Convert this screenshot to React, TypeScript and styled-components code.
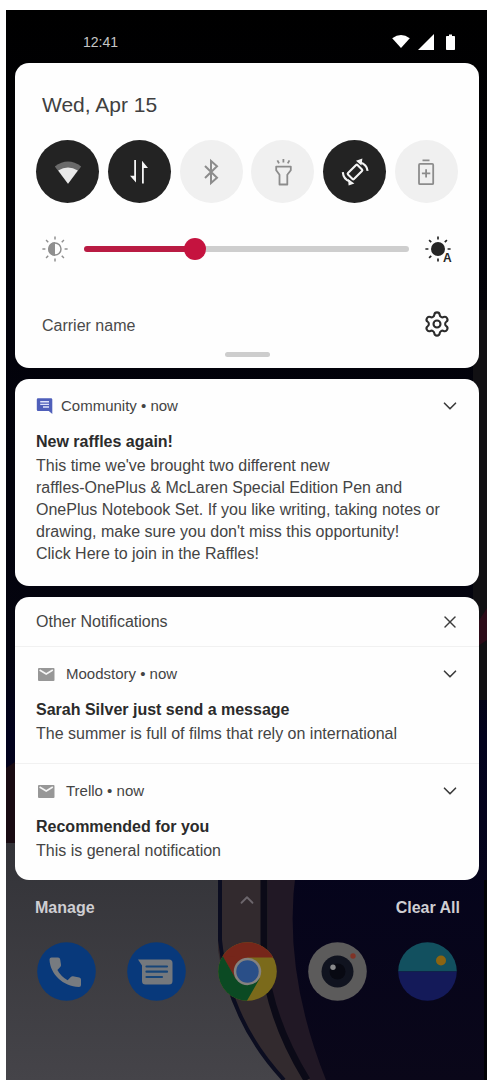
import React, { useState } from "react";
import styled, { createGlobalStyle } from "styled-components";
import { ChevronDown, ChevronUp, Settings, X } from "lucide-react";

const Global = createGlobalStyle`
  *, *::before, *::after { box-sizing: border-box; }
  body { margin: 0; background: #fff; font-family: "Liberation Sans", Arial, sans-serif; }
  button { border: 0; padding: 0; margin: 0; background: none; color: inherit; font: inherit; cursor: pointer; }
  h1, h2, h3, p { margin: 0; font: inherit; }
  svg { display: block; }
`;

const Phone = styled.main`
  position: relative;
  isolation: isolate;
  margin: 10px 0 1px 6px;
  padding: 0 8px 0 9px;
  background: #020206;
`;

const Wallpaper = styled.svg`
  position: absolute;
  inset: 0;
  z-index: -1;
  width: 100%;
  height: 100%;
`;

const StatusBar = styled.header`
  display: flex;
  align-items: center;
  justify-content: space-between;
  height: 53px;
  padding: 10px 20px 0 68px;
  color: #c6c6c6;
  font-size: 14px;
`;

const StatusIcons = styled.div`
  display: flex;
  align-items: center;
  gap: 8px;
`;

const Stack = styled.div`
  display: flex;
  flex-direction: column;
  gap: 11px;
`;

const Card = styled.section`
  border-radius: 14px;
  background: #fefefe;
  color: #444;
  overflow: hidden;
`;

const QuickPanel = styled(Card)`
  display: flex;
  flex-direction: column;
  padding: 28px 21px 11px;
`;

const DateLabel = styled.h1`
  padding-left: 6px;
  color: #404040;
  font-size: 21px;
  line-height: 28px;
`;

const Toggles = styled.div`
  display: flex;
  justify-content: space-between;
  margin-top: 21px;
`;

const Toggle = styled.button<{ $on: boolean }>`
  display: grid;
  place-items: center;
  width: 63px;
  height: 63px;
  border-radius: 50%;
  background: ${(p) => (p.$on ? "#232323" : "#f0f0f0")};
  color: ${(p) => (p.$on ? "#f4f4f4" : "#8c8c8c")};
`;

const BrightnessRow = styled.div`
  display: flex;
  align-items: center;
  justify-content: space-between;
  gap: 16px;
  height: 32px;
  margin-top: 30px;
  padding: 0 3px 0 6px;

  & > svg { flex: none; }
`;

const Slider = styled.input`
  appearance: none;
  flex: 1;
  min-width: 0;
  height: 22px;
  margin: 0;
  background: transparent;

  &::-webkit-slider-runnable-track {
    height: 6px;
    border-radius: 3px;
    background: linear-gradient(to right, #b91b43 var(--level), #cecece var(--level));
  }
  &::-webkit-slider-thumb {
    appearance: none;
    width: 22px;
    height: 22px;
    margin-top: -8px;
    border-radius: 50%;
    background: #c5133f;
  }
`;

const PanelFooter = styled.div`
  display: flex;
  align-items: flex-end;
  justify-content: space-between;
  height: 28px;
  margin-top: 45px;
  padding: 0 7px 0 6px;
  color: #4a4a4a;
  font-size: 16px;
  line-height: 24px;
`;

const SettingsButton = styled.button`
  color: #2c2c2c;
`;

const Handle = styled.div`
  width: 45px;
  height: 5px;
  margin: 14px auto 0;
  border-radius: 3px;
  background: #cdcdcd;
`;

const Item = styled.article<{ $tall?: boolean }>`
  padding: 16px 21px ${(p) => (p.$tall ? 21 : 18)}px;
  font-size: 16px;
  line-height: 22px;

  & + & { border-top: 1px solid #f1f1f1; }
`;

const ItemHeader = styled.div<{ $gap: number }>`
  display: flex;
  align-items: center;
  gap: ${(p) => p.$gap}px;
  margin-bottom: 14px;
  font-size: 15px;

  & > button { margin-left: auto; }
`;

const ItemTitle = styled.h3`
  margin-bottom: 2px;
  color: #2b2b2b;
  font-weight: 700;
  font-size: 16px;
`;

const GroupHeader = styled.div`
  display: flex;
  align-items: center;
  justify-content: space-between;
  height: 50px;
  padding: 0 21px;
  border-bottom: 1px solid #f1f1f1;
  font-size: 16px;
`;

const IconButton = styled.button`
  display: flex;
  align-items: center;
  justify-content: center;
  width: 16px;
  height: 16px;
  color: #3c3c3c;

  & > svg { flex: none; }
`;

const Home = styled.footer`
  position: relative;
  padding: 17px 19px 79px 20px;
`;

const Actions = styled.div`
  display: flex;
  justify-content: space-between;
  color: #cfced2;
  font-weight: 700;
  font-size: 16px;
  line-height: 22px;
`;

const SwipeHint = styled.div`
  position: absolute;
  top: 9px;
  left: 50%;
  transform: translateX(-50%);
  color: #6c666c;
`;

const Dock = styled.nav`
  display: flex;
  justify-content: space-between;
  margin: 23px 3px 0 2px;
`;

const WifiIcon = () => (
  <svg width="32" height="32" viewBox="0 0 32 32">
    <path d="M16 27.7 2.8 10.4Q16 .8 29.2 10.4Z" fill="#6a6a6a" />
    <path d="M16 27.7 6.2 14.6Q16 8.2 25.8 14.6Z" fill="#e9e9e9" />
  </svg>
);

const DataIcon = () => (
  <svg width="32" height="32" viewBox="0 0 32 32" fill="currentColor">
    <path d="M11.2 4H13V26.5L7 19.8H11.2Z" />
    <path d="M20.8 27.5H19V4.7L25 12H20.8Z" />
  </svg>
);

const BluetoothIcon = () => (
  <svg width="32" height="32" viewBox="0 0 32 32" fill="none" stroke="currentColor" strokeWidth="2">
    <path d="M10 10 22 21.7 16 27V5L22 10.3 10 22" />
  </svg>
);

const TorchIcon = () => (
  <svg width="32" height="32" viewBox="0 0 32 32" fill="none" stroke="currentColor" strokeWidth="1.8">
    <path d="M9.2 10.6H23.8V14.2L20.3 18.8V28.5H12.5V18.8L9.2 14.2Z" strokeLinejoin="round" />
    <path d="M10.4 4.4 12 7.4M16.4 3V6.6M22.4 4.4 20.8 7.4" />
  </svg>
);

const RotateIcon = () => (
  <svg width="32" height="32" viewBox="0 0 32 32" fill="none" stroke="currentColor" strokeWidth="2.1">
    <rect x="11.8" y="9.3" width="8.4" height="13.4" rx="1" transform="rotate(45 16 16)" />
    <path d="M21 6.6Q27.8 8.4 28.6 14.8M11 25.4Q4.4 23.6 3.8 16.2" />
    <path d="M17 4.8 23.4 2.6 22.4 9.4ZM15.4 27.4 9 23 9.6 29.6Z" fill="currentColor" stroke="none" />
  </svg>
);

const BatterySaverIcon = () => (
  <svg width="32" height="32" viewBox="0 0 32 32" fill="none" stroke="currentColor" strokeWidth="1.8">
    <path d="M12.5 4.3H19.5" />
    <rect x="9" y="7.9" width="14.2" height="20.3" rx="1" />
    <path d="M16.1 13.2V21.6M11.9 17.4H20.3" />
  </svg>
);

const rays = [0, 45, 90, 135, 180, 225, 270, 315];

const SunDimIcon = () => (
  <svg width="26" height="26" viewBox="0 0 26 26" fill="none" stroke="#8f8f8f" strokeWidth="1.5">
    {rays.map((a) => (
      <path key={a} d="M13 .4V3.4" transform={`rotate(${a} 13 13)`} />
    ))}
    <circle cx="13" cy="13" r="6" />
    <path d="M13 6A7 7 0 0 0 13 20Z" fill="#8f8f8f" stroke="none" />
  </svg>
);

const SunAutoIcon = () => (
  <svg width="30" height="32" viewBox="0 -3 30 32">
    <g stroke="#262626" strokeWidth="1.7">
      {rays.filter((a) => a !== 135).map((a) => (
        <path key={a} d="M13 .4V3.4" transform={`rotate(${a} 13 13)`} />
      ))}
    </g>
    <circle cx="13" cy="13" r="7" fill="#262626" />
    <text x="18" y="26" fill="#262626" stroke="#fefefe" strokeWidth="2" paintOrder="stroke" fontSize="12" fontWeight="700">
      A
    </text>
  </svg>
);

const CommunityIcon = () => (
  <svg width="17" height="16" viewBox="0 0 17 16">
    <path d="M2 .3H15Q16.3.3 16.3 1.6V16L12.8 13H2Q.8 13 .8 11.8V1.5Q.8.3 2 .3Z" fill="#4f5fba" />
    <path d="M4.2 3.8H13M4.2 6.4H13M7 9H13" stroke="#dfe3fa" strokeWidth="1.4" />
  </svg>
);

const MailIcon = () => (
  <svg width="20" height="14" viewBox="0 0 20 14">
    <rect x="2" y="1" width="16.5" height="13" rx="1" fill="#979797" />
    <path d="M3.6 3 10.2 7 16.8 3" fill="none" stroke="#f5f5f5" strokeWidth="1.6" />
  </svg>
);

const PhoneIcon = () => (
  <svg width="59" height="59" viewBox="0 0 59 59">
    <circle cx="29.5" cy="29.5" r="29.3" fill="#08397b" />
    <path
      d="M14.5 15.5H21Q23 15.5 23.2 17.5L24 22.7Q24.2 24 23.2 25L20.4 28Q24 34.6 30.6 38.2L33.8 35Q34.8 34 36 34.3L42.3 35.4Q44 35.7 44 37.5V43Q44 45 42 45C26 44.6 13 32 12.5 17.5Q12.5 15.5 14.5 15.5Z"
      fill="#777b80"
    />
  </svg>
);

const MessagesIcon = () => (
  <svg width="59" height="59" viewBox="0 0 59 59">
    <circle cx="29.5" cy="29.5" r="29.3" fill="#08397b" />
    <path d="M11 17.5H42Q45.5 17.5 45.5 21V39Q45.5 42.5 42 42.5H18.5Q15 42.5 15 39V23.5Z" fill="#74787d" />
    <path d="M19.5 24.5H40M19.5 29.7H40M19.5 35H35" stroke="#174578" strokeWidth="2.2" strokeLinecap="round" />
  </svg>
);

const BrowserIcon = () => (
  <svg width="59" height="59" viewBox="0 0 59 59">
    <clipPath id="disc">
      <circle cx="29.5" cy="29.5" r="29.3" />
    </clipPath>
    <g clipPath="url(#disc)">
      <rect width="59" height="59" fill="#7b6a1b" />
      <rect width="59" height="15.5" fill="#76261a" />
      <path d="M4 13.5 17.5 15H30L17.5 37Z" fill="#76261a" />
      <path d="M0 6 5 14.5 17.5 36.5 29.5 43 42 36 28.8 59H0Z" fill="#0b4a23" />
    </g>
    <circle cx="29.5" cy="29.5" r="13.7" fill="#85827f" />
    <circle cx="29.5" cy="29.5" r="11.2" fill="#2a4f88" />
  </svg>
);

const CameraIcon = () => (
  <svg width="59" height="59" viewBox="0 0 59 59">
    <circle cx="29.5" cy="29.5" r="29.3" fill="#5c5b5b" />
    <circle cx="29.5" cy="29.5" r="16" fill="#10131f" />
    <circle cx="29.5" cy="29.5" r="8" fill="#080912" />
    <circle cx="25" cy="25.3" r="2.7" fill="#898a8c" />
    <circle cx="45" cy="14" r="2.7" fill="#803326" />
  </svg>
);

const GalleryIcon = () => (
  <svg width="59" height="59" viewBox="0 0 59 59">
    <path d="M.2 29.5A29.3 29.3 0 0 1 58.8 29.5Z" fill="#12505f" />
    <path d="M.2 29.5A29.3 29.3 0 0 0 58.8 29.5Z" fill="#141a59" />
    <circle cx="43" cy="18.5" r="5" fill="#8b6411" />
  </svg>
);

const Background = () => (
  <Wallpaper viewBox="0 0 481 1070" preserveAspectRatio="none" aria-hidden="true">
    <defs>
      <linearGradient id="sky" x1="0" y1="0" x2="0" y2="1">
        <stop offset="0" stopColor="#000" />
        <stop offset=".3" stopColor="#02020a" />
        <stop offset=".6" stopColor="#04040f" />
        <stop offset=".68" stopColor="#02021d" />
        <stop offset="1" stopColor="#0a0719" />
      </linearGradient>
      <linearGradient id="slate" x1="0" y1="0" x2="0" y2="1">
        <stop offset="0" stopColor="#333338" />
        <stop offset="1" stopColor="#454449" />
      </linearGradient>
    </defs>
    <rect width="481" height="1070" fill="url(#sky)" />
    <path d="M467 300H481V690H467Z" fill="#111013" />
    <path d="M472 612 481 598V630L472 636Z" fill="#2c0b18" />
    <path d="M0 758 12 750V833H0Z" fill="#190b12" />
    <path d="M254 860H290Q276 960 320 1070H254Z" fill="#211825" />
    <path d="M0 833H220V930L296 1070H0Z" fill="url(#slate)" />
    <path d="M212 860H262V965Q268 1020 304 1070H278Q222 1010 212 940Z" fill="#322a2e" />
    <path d="M214 860V930Q222 1010 278 1070" fill="none" stroke="#0b0d20" strokeWidth="4" />
    <path d="M258 860V950Q264 1010 301 1070" fill="none" stroke="#0b0a17" strokeWidth="7" />
    <rect x="478" y="870" width="3" height="200" fill="#020206" />
  </Wallpaper>
);

const Expand = () => (
  <IconButton aria-label="Expand">
    <ChevronDown size={22} strokeWidth={1.8} />
  </IconButton>
);

const tiles = [
  { label: "Wi-Fi", icon: <WifiIcon />, on: true },
  { label: "Mobile data", icon: <DataIcon />, on: true },
  { label: "Bluetooth", icon: <BluetoothIcon />, on: false },
  { label: "Flashlight", icon: <TorchIcon />, on: false },
  { label: "Auto-rotate", icon: <RotateIcon />, on: true },
  { label: "Battery saver", icon: <BatterySaverIcon />, on: false },
];

const messages = [
  { app: "Moodstory", title: "Sarah Silver just send a message", text: "The summer is full of films that rely on international" },
  { app: "Trello", title: "Recommended for you", text: "This is general notification" },
];

const apps = [
  { label: "Phone", icon: <PhoneIcon /> },
  { label: "Messages", icon: <MessagesIcon /> },
  { label: "Browser", icon: <BrowserIcon /> },
  { label: "Camera", icon: <CameraIcon /> },
  { label: "Gallery", icon: <GalleryIcon /> },
];

export default function App() {
  const [active, setActive] = useState(tiles.map((t) => t.on));
  const [level, setLevel] = useState(33);

  return (
    <>
      <Global />
      <Phone>
        <Background />
        <StatusBar>
          <time>12:41</time>
          <StatusIcons>
            <svg width="18" height="16" viewBox="0 0 18 16" fill="#fff">
              <path d="M9 14 .2 4.2Q9-2 17.8 4.2Z" />
            </svg>
            <svg width="16" height="16" viewBox="0 0 16 16" fill="#fff">
              <path d="M16 0V16H0Z" />
            </svg>
            <svg width="17" height="16" viewBox="0 0 17 16" fill="#fff">
              <path d="M7 .5H10V2H12.2Q13 2 13 2.8V15.2Q13 16 12.2 16H4.8Q4 16 4 15.2V2.8Q4 2 4.8 2H7Z" />
            </svg>
          </StatusIcons>
        </StatusBar>

        <Stack>
          <QuickPanel>
            <DateLabel>Wed, Apr 15</DateLabel>
            <Toggles>
              {tiles.map((tile, i) => (
                <Toggle
                  key={tile.label}
                  $on={active[i]}
                  aria-label={tile.label}
                  aria-pressed={active[i]}
                  onClick={() => setActive(active.map((v, j) => (j === i ? !v : v)))}
                >
                  {tile.icon}
                </Toggle>
              ))}
            </Toggles>
            <BrightnessRow>
              <SunDimIcon />
              <Slider
                type="range"
                aria-label="Brightness"
                min={0}
                max={100}
                value={level}
                onChange={(e) => setLevel(Number(e.target.value))}
                style={{ "--level": `${level}%` } as React.CSSProperties}
              />
              <SunAutoIcon />
            </BrightnessRow>
            <PanelFooter>
              <span>Carrier name</span>
              <SettingsButton aria-label="Settings">
                <Settings size={28} strokeWidth={1.8} />
              </SettingsButton>
            </PanelFooter>
            <Handle />
          </QuickPanel>

          <Card>
            <Item $tall>
              <ItemHeader $gap={8}>
                <CommunityIcon />
                <span>Community • now</span>
                <Expand />
              </ItemHeader>
              <ItemTitle>New raffles again!</ItemTitle>
              <p>
                This time we've brought two different new
                <br />
                raffles-OnePlus &amp; McLaren Special Edition Pen and
                <br />
                OnePlus Notebook Set. If you like writing, taking notes or
                <br />
                drawing, make sure you don't miss this opportunity!
                <br />
                Click Here to join in the Raffles!
              </p>
            </Item>
          </Card>

          <Card>
            <GroupHeader>
              <h2>Other Notifications</h2>
              <IconButton aria-label="Dismiss">
                <X size={20} strokeWidth={1.7} />
              </IconButton>
            </GroupHeader>
            {messages.map((m) => (
              <Item key={m.app}>
                <ItemHeader $gap={10}>
                  <MailIcon />
                  <span>{m.app} • now</span>
                  <Expand />
                </ItemHeader>
                <ItemTitle>{m.title}</ItemTitle>
                <p>{m.text}</p>
              </Item>
            ))}
          </Card>
        </Stack>

        <Home>
          <SwipeHint>
            <ChevronUp size={22} strokeWidth={2} />
          </SwipeHint>
          <Actions>
            <button>Manage</button>
            <button>Clear All</button>
          </Actions>
          <Dock>
            {apps.map((app) => (
              <button key={app.label} aria-label={app.label}>
                {app.icon}
              </button>
            ))}
          </Dock>
        </Home>
      </Phone>
    </>
  );
}
